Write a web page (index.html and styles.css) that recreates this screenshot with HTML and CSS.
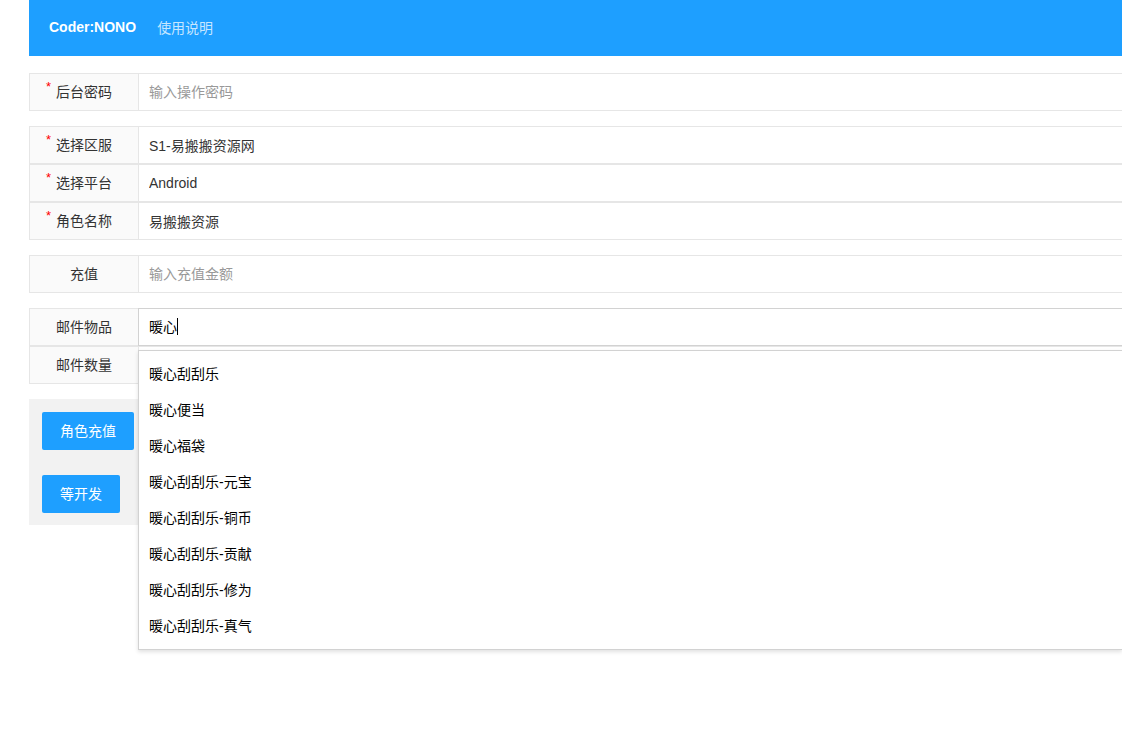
FILE: index.html
```html
<!DOCTYPE html>
<html lang="zh-CN">
<head>
<meta charset="utf-8">
<title>Coder:NONO</title>
<link rel="stylesheet" href="styles.css">
</head>
<body>
<div class="page">
  <header class="header">
    <span class="logo">Coder:NONO</span>
    <a class="nav-link">使用说明</a>
  </header>

  <div class="form">
    <div class="group">
      <div class="row">
        <label class="label"><span class="req">*</span>后台密码</label>
        <div class="field"><input class="input" type="text" placeholder="输入操作密码"></div>
      </div>
    </div>

    <div class="group">
      <div class="row">
        <label class="label"><span class="req">*</span>选择区服</label>
        <div class="field"><input class="input" type="text" value="S1-易搬搬资源网"></div>
      </div>
      <div class="row">
        <label class="label"><span class="req">*</span>选择平台</label>
        <div class="field"><input class="input" type="text" value="Android"></div>
      </div>
      <div class="row">
        <label class="label"><span class="req">*</span>角色名称</label>
        <div class="field"><input class="input" type="text" value="易搬搬资源"></div>
      </div>
    </div>

    <div class="group">
      <div class="row">
        <label class="label">充值</label>
        <div class="field"><input class="input" type="text" placeholder="输入充值金额"></div>
      </div>
    </div>

    <div class="group">
      <div class="row">
        <label class="label">邮件物品</label>
        <div class="field">
          <div class="input input-focus">暖心<span class="caret"></span></div>
          <ul class="dropdown">
            <li>暖心刮刮乐</li>
            <li>暖心便当</li>
            <li>暖心福袋</li>
            <li>暖心刮刮乐-元宝</li>
            <li>暖心刮刮乐-铜币</li>
            <li>暖心刮刮乐-贡献</li>
            <li>暖心刮刮乐-修为</li>
            <li>暖心刮刮乐-真气</li>
          </ul>
        </div>
      </div>
      <div class="row">
        <label class="label">邮件数量</label>
        <div class="field"><input class="input" type="text"></div>
      </div>
    </div>

    <div class="actions">
      <button class="btn" type="button">角色充值</button>
      <button class="btn" type="button">等开发</button>
    </div>
  </div>
</div>
</body>
</html>
```

FILE: styles.css
```css
body {
  margin: 0;
  padding: 0;
  min-height: 100vh;
  background: #fff;
  font-family: "Liberation Sans", Arial, "Noto Sans CJK SC", sans-serif;
  font-size: 14px;
  color: #333;
}

.page {
  margin-left: 29px;
  min-height: 700px;
}

.header {
  height: 56px;
  background: #1E9FFF;
  display: flex;
  align-items: center;
  padding: 0 0 2px 20px;
  box-sizing: border-box;
}

.logo {
  color: #fff;
  font-weight: bold;
  font-size: 14px;
}

.nav-link {
  margin-left: 21px;
  color: rgba(255, 255, 255, 0.75);
  font-size: 14px;
}

.form {
  padding-top: 17px;
}

.group {
  margin-bottom: 15px;
}

.row {
  display: flex;
  height: 38px;
}

.label {
  position: relative;
  box-sizing: border-box;
  width: 110px;
  height: 38px;
  flex: none;
  padding: 8px 15px;
  line-height: 20px;
  text-align: center;
  background: #FAFAFA;
  border: 1px solid #e6e6e6;
  color: #333;
}

.req {
  position: absolute;
  left: 16px;
  top: 6px;
  color: #ff0000;
  font-size: 13px;
  line-height: 14px;
}

.field {
  position: relative;
  flex: 1;
  margin-left: -1px;
}

.input {
  display: block;
  box-sizing: border-box;
  width: 100%;
  height: 38px;
  margin: 0;
  padding: 0 10px;
  line-height: 36px;
  border: 1px solid #e6e6e6;
  border-right: none;
  background: #fff;
  font-family: inherit;
  font-size: 14px;
  color: #333;
  outline: none;
}

.input::placeholder {
  color: #999;
}

.input-focus {
  border-color: #d2d2d2;
  color: #000;
}

.caret {
  display: inline-block;
  width: 1px;
  height: 17px;
  background: #000;
  vertical-align: -3px;
}

.dropdown {
  position: absolute;
  top: 42px;
  left: 0;
  right: 0;
  z-index: 10;
  margin: 0;
  padding: 5px 0;
  list-style: none;
  background: #fff;
  border: 1px solid #d2d2d2;
  border-right: none;
  box-shadow: 0 2px 4px rgba(0, 0, 0, 0.12);
}

.dropdown li {
  padding: 0 10px;
  line-height: 36px;
  color: #000;
  white-space: nowrap;
}

.actions {
  background: #f2f2f2;
  padding: 13px 13px 12px;
  display: flex;
  flex-direction: column;
  align-items: flex-start;
  gap: 25px;
}

.btn {
  height: 38px;
  padding: 0 18px;
  border: none;
  border-radius: 2px;
  background: #1E9FFF;
  color: #fff;
  font-family: inherit;
  font-size: 14px;
  line-height: 38px;
}
```
